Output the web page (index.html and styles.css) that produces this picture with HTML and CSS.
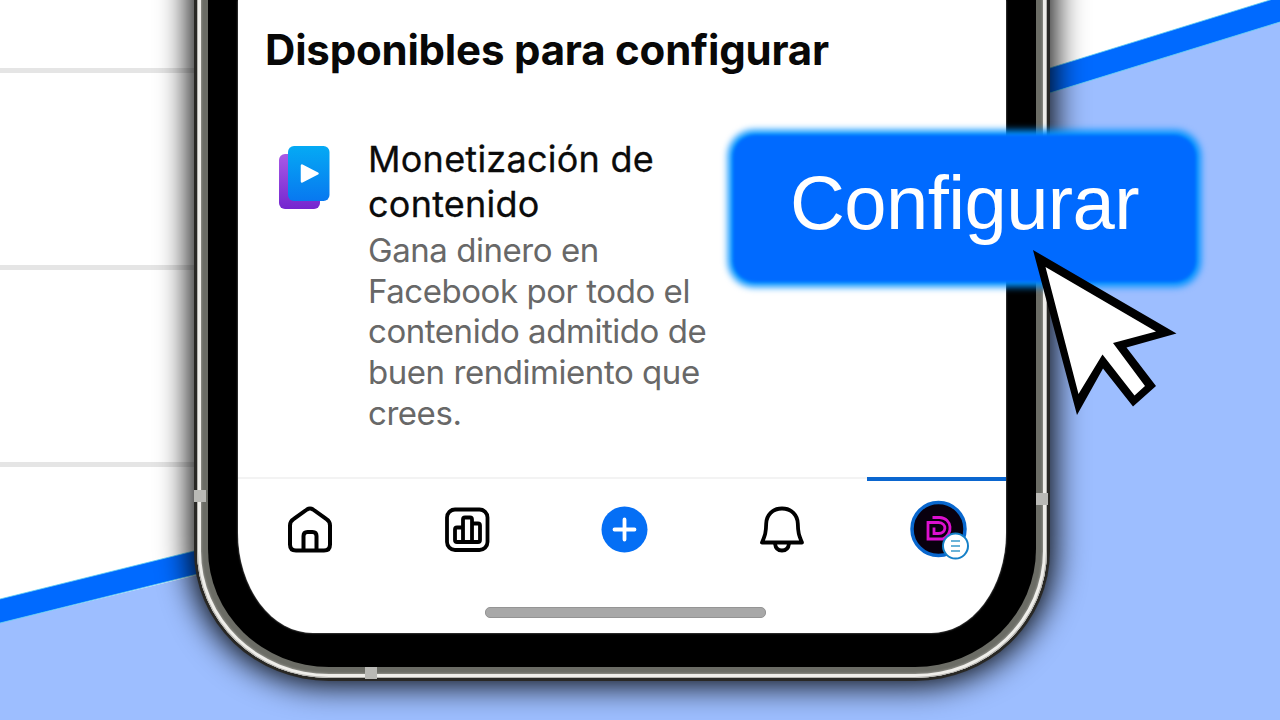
FILE: index.html
```html
<!DOCTYPE html>
<html lang="es">
<head>
    <meta charset="UTF-8">
    <meta name="viewport" content="width=device-width, initial-scale=1.0">
    <title>Configurar</title>
    <link rel="stylesheet" href="styles.css">
</head>
<body>
    <div id="scene">
        <svg class="backdrop" viewBox="0 0 1280 720">
            <rect width="1280" height="720" fill="#fff"/>
            <path d="M0 70.5H400M0 267.5H400M0 464.5H400" stroke="#e5e5e5" stroke-width="5"/>
            <path d="M0 623L210 572L600 300L1040 96L1280 22V720H0Z" fill="#9dbeff"/>
            <path d="M-20 604L0 599L210 547L600 280L1040 71L1270 0L1300 -10V16L1280 22L1040 96L600 310L210 571L0 623L-20 628Z" fill="#006aff" stroke="#5fd0f0" stroke-width=".8"/>
        </svg>

        <div id="phone">
            <i class="notch n1"></i>
            <i class="notch n2"></i>
            <i class="notch n3"></i>
            <div class="steel">
                <div class="bezel">
                    <div class="screen">
                        <h1>Disponibles para configurar</h1>
                        <div class="item">
                            <svg class="item-icon" width="60" height="70" viewBox="0 0 60 70">
                                <defs>
                                    <linearGradient id="gBlue" x1="0" y1="0" x2="0" y2="1">
                                        <stop offset="0" stop-color="#05aaf4"/>
                                        <stop offset="1" stop-color="#0878f0"/>
                                    </linearGradient>
                                    <linearGradient id="gPurple" x1="0" y1="0" x2="0" y2="1">
                                        <stop offset="0" stop-color="#a95ae6"/>
                                        <stop offset="1" stop-color="#7426cf"/>
                                    </linearGradient>
                                </defs>
                                <rect x="5" y="11" width="41" height="55" rx="6" fill="url(#gPurple)"/>
                                <rect x="14" y="3" width="41.500" height="55" rx="6" fill="url(#gBlue)"/>
                                <path d="M28 22.500v16l15.500-8z" fill="#fff" stroke="#fff" stroke-width="2.500" stroke-linejoin="round"/>
                            </svg>
                            <div class="item-text">
                                <h2>Monetización de<br>contenido</h2>
                                <p>Gana dinero en<br>Facebook por todo el<br>contenido admitido de<br>buen rendimiento que<br>crees.</p>
                            </div>
                        </div>
                        <div class="tabs">
                            <div class="tab">
                                <svg width="50" height="50" viewBox="1 0 50 50" fill="none" stroke="#000" stroke-width="4" stroke-linejoin="round">
                                    <path d="M5 20.500Q5 16.500 8.500 14.200L22 4.500Q25 2.500 28 4.500L41.500 14.200Q45 16.500 45 20.500V39.500Q45 45.500 39 45.500H11Q5 45.500 5 39.500Z"/>
                                    <path d="M18.500 45.500V31Q18.500 27 22.500 27H27.500Q31.500 27 31.500 31V45.500"/>
                                </svg>
                            </div>
                            <div class="tab">
                                <svg width="50" height="50" viewBox="0.500 0 50 50" fill="none" stroke="#000" stroke-width="3.800" stroke-linejoin="round">
                                    <rect x="4.500" y="4.500" width="40.500" height="40.500" rx="8"/>
                                    <path d="M20.500 37H14.500Q12.500 37 12.500 35V24.500Q12.500 22.500 14.500 22.500H20.500M20.500 37V14.500Q20.500 12.500 22.500 12.500H27.500Q29.500 12.500 29.500 14.500V37ZM29.500 18.500H35.500Q37.500 18.500 37.500 20.500V35Q37.500 37 35.500 37H29.500"/>
                                </svg>
                            </div>
                            <div class="tab">
                                <svg width="50" height="50" viewBox="0.500 0 50 50">
                                    <circle cx="25" cy="24.500" r="23" fill="#056ff5"/>
                                    <path d="M25 14.500V34.500M15 24.500H35" stroke="#fff" stroke-width="3.800" stroke-linecap="round"/>
                                </svg>
                            </div>
                            <div class="tab">
                                <svg width="50" height="50" viewBox="0 0 50 50" fill="none" stroke="#000" stroke-width="3.800" stroke-linejoin="round">
                                    <path d="M25 3.500C15.500 3.500 9.500 10 9.200 18.500C9 27.500 8.200 30 5 37.500H45C41.800 30 41 27.500 40.800 18.500C40.500 10 34.500 3.500 25 3.500Z"/>
                                    <path d="M18 38.500C18.500 43 21 45.500 25 45.500S31.500 43 32 38.500"/>
                                </svg>
                            </div>
                            <div class="tab active">
                                <svg width="64" height="64" viewBox="0.500 0 64 64" fill="none">
                                    <circle cx="32" cy="31" r="26.500" fill="#09000e" stroke="#0967ce" stroke-width="3.500"/>
                                    <path d="M26 19.500H33C46 20 47 37 36 41H21.500V24.500H32C41 25 40 35.500 32 35.500H27.500V29.500" stroke="#dd10d0" stroke-width="2.800"/>
                                    <circle cx="49" cy="48" r="12.500" fill="#fff" stroke="#1580c8" stroke-width="2"/>
                                    <path d="M44.500 43H53.500M44.500 48H53.500M44.500 53H53.500" stroke="#3a9acb" stroke-width="1.700"/>
                                </svg>
                            </div>
                        </div>
                        <div class="home-bar"></div>
                    </div>
                </div>
            </div>
        </div>

        <div class="btn">Configurar</div>

        <svg class="cursor" width="150" height="170" viewBox="0 0 150 170">
            <path d="M3 0L146.500 83.500L96.500 97.500L126 136L103 156.500L73 118.500L47 165Z" fill="#000"/>
            <path d="M15.500 17L126 81.500L83 93L115 136L104.500 145.500L72.500 104.500L48.500 144Z" fill="#fff"/>
        </svg>
    </div>
</body>
</html>
```
FILE: styles.css
```css
*{margin:0;padding:0;box-sizing:border-box;}
body{background:#fff;font-family:Inter,"Liberation Sans",sans-serif;}
#scene{width:1280px;height:720px;overflow:hidden;position:relative;}
.backdrop{position:absolute;left:0;top:0;width:1280px;height:720px;}

/* phone, its upper part runs off the top of the scene */
#phone{position:relative;width:856px;height:741px;margin:-60px 0 0 194px;padding:0 3px 3px;background:#292825;border-radius:0 0 135px 135px / 0 0 130px 130px;box-shadow:0 0 32px 4px #000;}
.steel{height:738px;padding:60px 11px 11px 11px;border-radius:0 0 132px 132px / 0 0 127px 127px;background:#6b6c65;box-shadow:inset 0 0 0 1px #b5b4b0, inset 0 0 0 4px #efeeea, inset 0 0 2px 5px #8d8d87;}
.bezel{height:667px;padding:0 30px 34px;background:#000;border-radius:0 0 121px 121px / 0 0 118px 118px;}
.screen{height:633px;padding-top:25px;background:#fff;border-radius:0 0 75px 75px / 0 0 100px 100px;box-shadow:0 0 2px #999;}
.notch{position:absolute;width:12px;height:12px;background:#b9b9b5;z-index:1;}
.n1{left:0;top:550px;}
.n2{right:2px;top:553px;}
.n3{left:171px;bottom:2px;}

.screen h1{padding-left:27px;font-size:42px;line-height:50px;font-weight:700;letter-spacing:-.2px;color:#080808;white-space:nowrap;}
.item{display:flex;height:402px;padding:62px 0 0 36px;}
.item-icon{flex:none;margin-top:6px;}
.item-text{padding-left:34px;white-space:nowrap;}
.item h2{margin-bottom:3px;font-size:36px;line-height:45px;font-weight:400;letter-spacing:.25px;color:#0b0b0b;-webkit-text-stroke:.3px #0b0b0b;}
.item p{font-size:33px;line-height:40.7px;letter-spacing:-.45px;color:#686868;}

.tabs{position:relative;display:grid;grid-template-columns:repeat(5,157px);justify-content:center;height:105px;padding-left:5px;border-top:2px solid #f3f3f3;}
.tab{display:flex;align-items:center;justify-content:center;height:101px;}
.tab.active:before{content:"";position:absolute;right:0;top:-2px;width:139px;height:4px;background:#0b66cf;}
.home-bar{width:281px;height:11px;margin:25px 0 0 247px;border-radius:5px;background:#a8a8a8;border:1px solid #949494;}

/* big button */
.btn{position:absolute;z-index:1;left:731px;top:133px;width:467px;height:151px;color:#fff;font-family:"Liberation Sans",Arial,sans-serif;font-size:76px;letter-spacing:-.6px;line-height:139px;text-align:center;}
.btn:before{content:"";position:absolute;z-index:-1;left:-3px;top:-3px;right:-3px;bottom:-3px;border-radius:26px;background:#0090ff;filter:blur(3.5px);}
.btn:after{content:"";position:absolute;z-index:-1;left:2px;top:2px;right:2px;bottom:2px;border-radius:22px;background:#006aff;filter:blur(1.5px);}
.cursor{position:absolute;z-index:2;left:1030px;top:250px;}
```
